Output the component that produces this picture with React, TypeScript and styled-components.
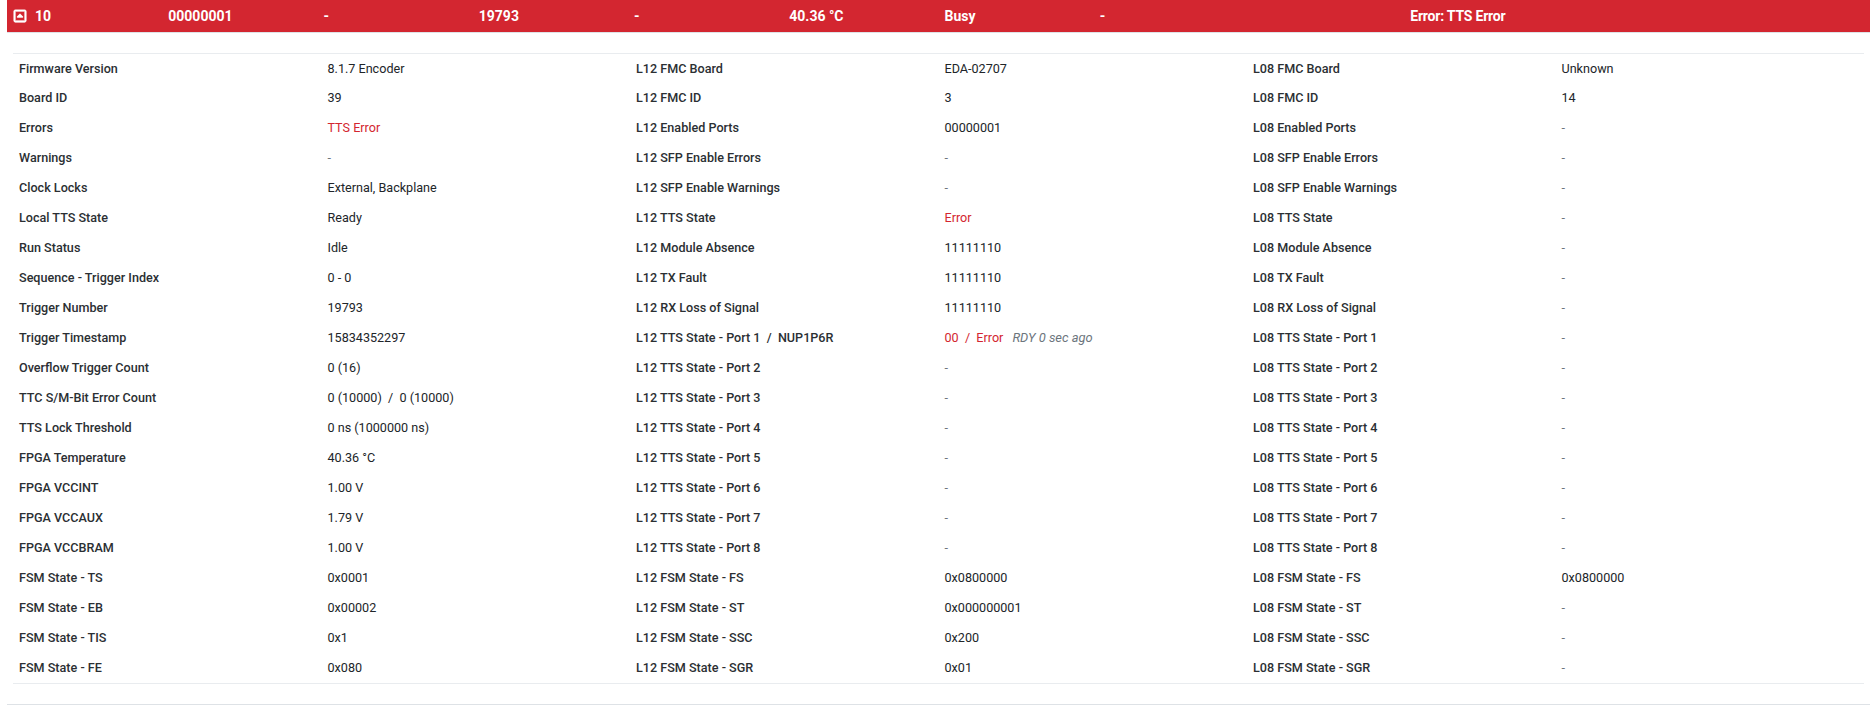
import React from "react";
import styled, { createGlobalStyle } from "styled-components";
import { FaRegCaretSquareUp } from "react-icons/fa";

const GlobalStyle = createGlobalStyle`
  html, body {
    margin: 0;
    padding: 0;
    background: #fff;
    overflow: hidden;
  }
  body {
    font-family: Roboto, "Liberation Sans", sans-serif;
    font-size: 12.6px;
    color: #212529;
  }
`;

const Page = styled.div`
  width: 1863px;
  height: 705px;
  margin-left: 7px;
  border-bottom: 1px solid #dee2e6;
  box-sizing: border-box;
`;

const Header = styled.div`
  display: grid;
  grid-template-columns: repeat(12, 1fr);
  align-items: center;
  height: 33px;
  box-sizing: border-box;
  background: #d32630;
  border-bottom: 1px solid #dee2e6;
  color: #fff;
  font-size: 14px;
  font-weight: 700;
`;

const HeadCell = styled.div<{ $span?: number }>`
  grid-column: span ${(p) => p.$span ?? 1};
  padding: 0 6px;
  display: flex;
  align-items: center;
  gap: 8px;
  white-space: nowrap;
  letter-spacing: ${(p) => (p.$span ? "-0.2px" : "normal")};
`;

const ToggleIcon = styled(FaRegCaretSquareUp)`
  stroke: currentColor;
  stroke-width: 28;
`;

const Details = styled.div`
  margin: 20px 6px 0;
  border-top: 1px solid #e9ecef;
  border-bottom: 1px solid #e9ecef;
`;

const Row = styled.div`
  display: grid;
  grid-template-columns: repeat(6, 1fr);
  align-items: center;
  height: 30px;
  padding-bottom: 1px;
  box-sizing: border-box;

  &:first-child {
    height: 29px;
    padding-bottom: 0;
  }
`;

const Label = styled.div`
  padding-left: 6px;
  font-weight: 500;
  color: #2b2f33;
  white-space: nowrap;
`;

const Value = styled.div<{ $tone?: "error" | "muted" }>`
  padding-left: 6px;
  white-space: nowrap;
  color: ${(p) =>
    p.$tone === "error" ? "#d32630" : p.$tone === "muted" ? "#6c757d" : "#212529"};
`;

const Age = styled.span`
  margin-left: 9px;
  font-size: 12.9px;
  font-style: italic;
  color: #6c757d;
`;

type Tone = "error" | "muted";
type Cell = string | [string, Tone];

const d: [string, Tone] = ["-", "muted"];
const e = (s: string): [string, Tone] => [s, "error"];

const rows: [string, Cell, string, Cell, string, Cell][] = [
  ["Firmware Version", "8.1.7 Encoder", "L12 FMC Board", "EDA-02707", "L08 FMC Board", "Unknown"],
  ["Board ID", "39", "L12 FMC ID", "3", "L08 FMC ID", "14"],
  ["Errors", e("TTS Error"), "L12 Enabled Ports", "00000001", "L08 Enabled Ports", d],
  ["Warnings", d, "L12 SFP Enable Errors", d, "L08 SFP Enable Errors", d],
  ["Clock Locks", "External, Backplane", "L12 SFP Enable Warnings", d, "L08 SFP Enable Warnings", d],
  ["Local TTS State", "Ready", "L12 TTS State", e("Error"), "L08 TTS State", d],
  ["Run Status", "Idle", "L12 Module Absence", "11111110", "L08 Module Absence", d],
  ["Sequence - Trigger Index", "0 - 0", "L12 TX Fault", "11111110", "L08 TX Fault", d],
  ["Trigger Number", "19793", "L12 RX Loss of Signal", "11111110", "L08 RX Loss of Signal", d],
  [
    "Trigger Timestamp",
    "15834352297",
    "L12 TTS State - Port 1\u00a0 /\u00a0 NUP1P6R",
    "port1",
    "L08 TTS State - Port 1",
    d,
  ],
  ["Overflow Trigger Count", "0 (16)", "L12 TTS State - Port 2", d, "L08 TTS State - Port 2", d],
  ["TTC S/M-Bit Error Count", "0 (10000)\u00a0 /\u00a0 0 (10000)", "L12 TTS State - Port 3", d, "L08 TTS State - Port 3", d],
  ["TTS Lock Threshold", "0 ns (1000000 ns)", "L12 TTS State - Port 4", d, "L08 TTS State - Port 4", d],
  ["FPGA Temperature", "40.36 °C", "L12 TTS State - Port 5", d, "L08 TTS State - Port 5", d],
  ["FPGA VCCINT", "1.00 V", "L12 TTS State - Port 6", d, "L08 TTS State - Port 6", d],
  ["FPGA VCCAUX", "1.79 V", "L12 TTS State - Port 7", d, "L08 TTS State - Port 7", d],
  ["FPGA VCCBRAM", "1.00 V", "L12 TTS State - Port 8", d, "L08 TTS State - Port 8", d],
  ["FSM State - TS", "0x0001", "L12 FSM State - FS", "0x0800000", "L08 FSM State - FS", "0x0800000"],
  ["FSM State - EB", "0x00002", "L12 FSM State - ST", "0x000000001", "L08 FSM State - ST", d],
  ["FSM State - TIS", "0x1", "L12 FSM State - SSC", "0x200", "L08 FSM State - SSC", d],
  ["FSM State - FE", "0x080", "L12 FSM State - SGR", "0x01", "L08 FSM State - SGR", d],
];

const renderValue = (c: Cell) => {
  if (c === "port1") {
    return (
      <Value $tone="error">
        00&nbsp; /&nbsp; Error
        <Age>RDY 0 sec ago</Age>
      </Value>
    );
  }
  if (Array.isArray(c)) return <Value $tone={c[1]}>{c[0]}</Value>;
  return <Value>{c}</Value>;
};

export default function App() {
  return (
    <>
      <GlobalStyle />
      <Page>
        <Header>
          <HeadCell>
            <ToggleIcon size={14} />
            10
          </HeadCell>
          <HeadCell>00000001</HeadCell>
          <HeadCell>-</HeadCell>
          <HeadCell>19793</HeadCell>
          <HeadCell>-</HeadCell>
          <HeadCell>40.36 °C</HeadCell>
          <HeadCell>Busy</HeadCell>
          <HeadCell>-</HeadCell>
          <HeadCell />
          <HeadCell $span={3}>Error: TTS Error</HeadCell>
        </Header>
        <Details>
          {rows.map((r) => (
            <Row key={r[0]}>
              <Label>{r[0]}</Label>
              {renderValue(r[1])}
              <Label>{r[2]}</Label>
              {renderValue(r[3])}
              <Label>{r[4]}</Label>
              {renderValue(r[5])}
            </Row>
          ))}
        </Details>
      </Page>
    </>
  );
}
